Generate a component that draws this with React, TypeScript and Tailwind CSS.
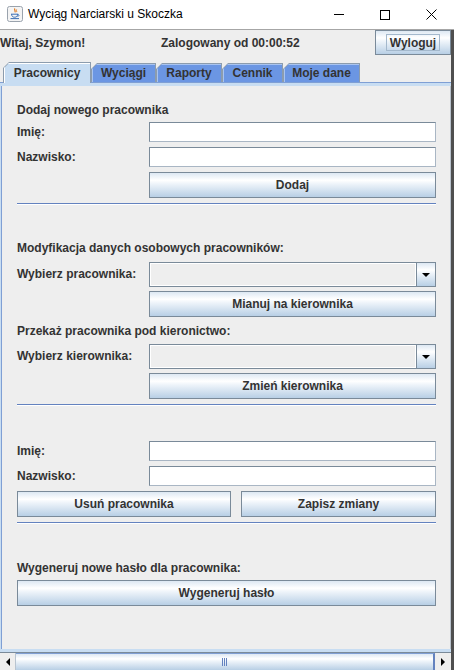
import React from 'react';

const btnBg =
  'bg-[linear-gradient(to_bottom,#dde8f3_0%,#ffffff_30%,#eef4fa_45%,#b8cfe5_100%)]';

const Button = ({ label, className = '' }: { label: string; className?: string }) => (
  <div
    className={`flex items-center justify-center h-[26px] border border-[#7a8a99] ${btnBg} text-[12px] font-bold text-[#333333] ${className}`}
  >
    {label}
  </div>
);

const Field = () => (
  <div className="flex-1 h-[20px] border border-[#7a8a99] border-b-[#a9b6c4] border-r-[#a9b6c4] bg-white shadow-[inset_1px_1px_0_#ffffff]" />
);

const Combo = () => (
  <div className="flex-1 flex h-[25px] border border-[#7a8a99]">
    <div className="flex-1 bg-[#eeeeee] shadow-[inset_1px_1px_0_#ffffff,inset_-1px_-1px_0_#ffffff]" />
    <div className={`w-[19px] flex items-center justify-center border-l border-[#7a8a99] ${btnBg}`}>
      <svg width="8" height="4" viewBox="0 0 8 4">
        <polygon points="0,0 8,0 4,4" fill="#000" />
      </svg>
    </div>
  </div>
);

const Row = ({ label, children }: { label: string; children: React.ReactNode }) => (
  <div className="flex items-center">
    <span className="w-[132px] text-[12px] font-bold text-[#333333] leading-[15px]">{label}</span>
    {children}
  </div>
);

const Heading = ({ text, className = '' }: { text: string; className?: string }) => (
  <div className={`h-[20px] flex items-center text-[12px] font-bold text-[#333333] ${className}`}>{text}</div>
);

const Separator = ({ className = '' }: { className?: string }) => (
  <div className={`h-[2px] border-t border-[#6382bf] bg-white ${className}`} />
);

const tabs = [
  { label: 'Pracownicy', w: 'w-[88px]', selected: true },
  { label: 'Wyciągi', w: 'w-[65px]', selected: false },
  { label: 'Raporty', w: 'w-[66px]', selected: false },
  { label: 'Cennik', w: 'w-[61px]', selected: false },
  { label: 'Moje dane', w: 'w-[77px]', selected: false },
];

const JavaIcon = () => (
  <svg width="16" height="16" viewBox="0 0 16 16">
    <rect x="0.5" y="0.5" width="15" height="15" rx="2" fill="#f4f4f4" stroke="#9aa3ad" />
    <path d="M8 2.5c-1.5 1.5 1.2 2.2 -0.2 3.8" stroke="#e07a1f" strokeWidth="1.2" fill="none" />
    <path d="M9.6 3.5c-1 1 0.8 1.5 -0.2 2.6" stroke="#e07a1f" strokeWidth="1" fill="none" />
    <path d="M4 8.2h7.2" stroke="#3b6fb6" strokeWidth="1" />
    <path d="M4.6 8.2c0 2.2 1.3 3 3 3s3-0.8 3-3" stroke="#3b6fb6" strokeWidth="1" fill="none" />
    <path d="M10.8 8.6c1.6 -0.2 1.6 1.8 -0.4 1.8" stroke="#3b6fb6" strokeWidth="0.9" fill="none" />
    <path d="M3.5 12.6h8.5" stroke="#3b6fb6" strokeWidth="1" />
  </svg>
);

export default function App() {
  return (
    <div className="w-[454px] h-[670px] flex flex-col bg-[#eeeeee] overflow-hidden font-['Liberation_Sans',Arial,sans-serif]">
      {/* title bar */}
      <div className="h-[30px] flex items-center bg-white border-b border-[#a6a6a6]">
        <div className="ml-[7px] mt-[-2px]">
          <JavaIcon />
        </div>
        <span className="ml-[5px] text-[12px] text-black mt-[-1px]">Wyciąg Narciarski u Skoczka</span>
        <div className="flex-1" />
        <div className="w-[46px] flex justify-center">
          <div className="w-[10px] h-[1px] bg-black" />
        </div>
        <div className="w-[46px] flex justify-center">
          <div className="w-[10px] h-[10px] border border-black" />
        </div>
        <div className="w-[46px] flex justify-center">
          <svg width="11" height="11" viewBox="0 0 11 11">
            <path d="M0.5 0.5L10.5 10.5M10.5 0.5L0.5 10.5" stroke="#000" strokeWidth="1" />
          </svg>
        </div>
      </div>

      <div className="flex-1 flex flex-col border-r-[3px] border-[#4f4f4f]">
        {/* header row */}
        <div className="h-[25px] flex items-center text-[12px] font-bold text-[#333333]">
          <span className="w-[161px] pt-[1px]">Witaj, Szymon!</span>
          <span className="flex-1 pt-[1px]">Zalogowany od 00:00:52</span>
          <div className={`w-[76px] h-[25px] flex items-center justify-center border border-[#7a8a99] ${btnBg}`}>
            <span className="h-[17px] px-[3px] flex items-center border border-[#a3b8cc]">Wyloguj</span>
          </div>
        </div>

        {/* tabs */}
        <div className="mt-[7px] h-[21px] flex items-end">
          <div className="w-[3px] h-[1px] bg-[#7f9fd4]" />
          {tabs.map((t) =>
            t.selected ? (
              <div
                key={t.label}
                className={`${t.w} h-[21px] bg-[#8c9cad] pt-[1px] px-[1px] [clip-path:polygon(6px_0,100%_0,100%_100%,0_100%,0_6px)]`}
              >
                <div className="h-full flex items-center justify-center bg-[#c8ddf2] text-[12px] font-bold text-[#333333] shadow-[inset_1px_1px_0_#ffffff] [clip-path:polygon(5px_0,100%_0,100%_100%,0_100%,0_5px)]">
                  <span className="mt-[-1px]">{t.label}</span>
                </div>
              </div>
            ) : (
              <div key={t.label} className={`${t.w} h-[20px] flex flex-col`}>
                <div className="flex-1 bg-[#8c9cad] pt-[1px] px-[1px] [clip-path:polygon(6px_0,100%_0,100%_100%,0_100%,0_6px)]">
                  <div className="h-full flex items-center justify-center bg-[#6b96e3] text-[12px] font-bold text-[#333333] shadow-[inset_1px_1px_0_#a9c4f0] [clip-path:polygon(5px_0,100%_0,100%_100%,0_100%,0_5px)]">
                    {t.label}
                  </div>
                </div>
                <div className="h-[1px] bg-[#7f9fd4]" />
              </div>
            )
          )}
          <div className="flex-1 h-[1px] bg-[#7f9fd4]" />
        </div>
        <div className="h-[3px] bg-[#c8ddf2]" />

        {/* content */}
        <div className="flex-1 flex border-l border-[#c8ddf2]">
          <div className="flex-1 flex flex-col border-l border-[#7f9fd4] border-r border-r-[#b9c2cc]">
            <div className="ml-[15px] w-[419px] flex flex-col">
              <Heading text="Dodaj nowego pracownika" className="mt-[14px]" />
              <div className="mt-[2px]">
                <Row label="Imię:">
                  <Field />
                </Row>
              </div>
              <div className="mt-[5px]">
                <Row label="Nazwisko:">
                  <Field />
                </Row>
              </div>
              <div className="mt-[5px] flex">
                <div className="w-[132px]" />
                <Button label="Dodaj" className="flex-1" />
              </div>
              <Separator className="mt-[5px]" />

              <Heading text="Modyfikacja danych osobowych pracowników:" className="mt-[33px]" />
              <div className="mt-[4px]">
                <Row label="Wybierz pracownika:">
                  <Combo />
                </Row>
              </div>
              <div className="mt-[4px] flex">
                <div className="w-[132px]" />
                <Button label="Mianuj na kierownika" className="flex-1" />
              </div>
              <Heading text="Przekaż pracownika pod kieronictwo:" className="mt-[4px]" />
              <div className="mt-[3px]">
                <Row label="Wybierz kierownika:">
                  <Combo />
                </Row>
              </div>
              <div className="mt-[4px] flex">
                <div className="w-[132px]" />
                <Button label="Zmień kierownika" className="flex-1" />
              </div>
              <Separator className="mt-[5px]" />

              <div className="mt-[35px]">
                <Row label="Imię:">
                  <Field />
                </Row>
              </div>
              <div className="mt-[5px]">
                <Row label="Nazwisko:">
                  <Field />
                </Row>
              </div>
              <div className="mt-[5px] flex gap-[10px]">
                <Button label="Usuń pracownika" className="w-[214px]" />
                <Button label="Zapisz zmiany" className="flex-1" />
              </div>
              <Separator className="mt-[5px]" />

              <Heading text="Wygeneruj nowe hasło dla pracownika:" className="mt-[34px]" />
              <Button label="Wygeneruj hasło" className="mt-[2px]" />
            </div>
          </div>
        </div>
        <div className="h-[3px] bg-[#c8ddf2]" />
        <div className="h-[1px] bg-[#7a8a99]" />

        {/* horizontal scrollbar */}
        <div className="h-[17px] flex bg-[#eeeeee]">
          <div className="w-[16px] flex items-center justify-center border-r border-[#b8c4d0]">
            <svg width="4" height="8" viewBox="0 0 4 8">
              <polygon points="4,0 4,8 0,4" fill="#000" />
            </svg>
          </div>
          <div className="flex-1 flex items-center justify-center border-t border-[#7f9fd4] border-r-2 border-r-[#6382bf] bg-[linear-gradient(to_bottom,#dde8f3_0%,#ffffff_30%,#eef4fa_45%,#b8cfe5_100%)]">
            <div className="flex gap-[1px]">
              <div className="w-[1px] h-[8px] bg-[#6382bf]" />
              <div className="w-[1px] h-[8px] bg-[#6382bf]" />
              <div className="w-[1px] h-[8px] bg-[#6382bf]" />
            </div>
          </div>
          <div className="w-[16px] flex items-center justify-center">
            <svg width="4" height="8" viewBox="0 0 4 8">
              <polygon points="0,0 0,8 4,4" fill="#000" />
            </svg>
          </div>
        </div>
      </div>
    </div>
  );
}
